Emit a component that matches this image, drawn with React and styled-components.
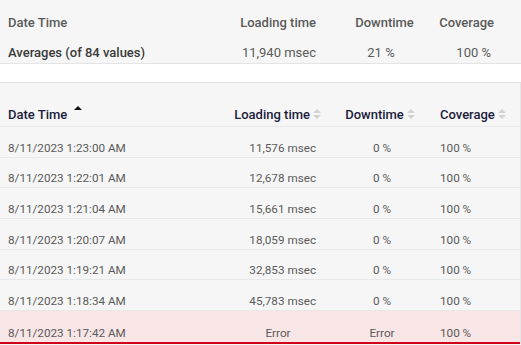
import React from "react";
import styled, { createGlobalStyle } from "styled-components";

const rows = [
  { date: "8/11/2023 1:23:00 AM", loading: "11,576 msec", down: "0 %", cov: "100 %" },
  { date: "8/11/2023 1:22:01 AM", loading: "12,678 msec", down: "0 %", cov: "100 %" },
  { date: "8/11/2023 1:21:04 AM", loading: "15,661 msec", down: "0 %", cov: "100 %" },
  { date: "8/11/2023 1:20:07 AM", loading: "18,059 msec", down: "0 %", cov: "100 %" },
  { date: "8/11/2023 1:19:21 AM", loading: "32,853 msec", down: "0 %", cov: "100 %" },
  { date: "8/11/2023 1:18:34 AM", loading: "45,783 msec", down: "0 %", cov: "100 %" },
  { date: "8/11/2023 1:17:42 AM", loading: "Error", down: "Error", cov: "100 %", error: true },
];

function SortIcon({ active }) {
  if (active) {
    return (
      <Icon width="8" height="12" viewBox="0 0 8 12" $active>
        <path d="M0 5 L4 1 L8 5 Z" fill="#111" />
      </Icon>
    );
  }
  return (
    <Icon width="8" height="12" viewBox="0 0 8 12">
      <path d="M0 5 L4 1 L8 5 Z" fill="#d2d2d2" />
      <path d="M0 7 L4 11 L8 7 Z" fill="#d2d2d2" />
    </Icon>
  );
}

function App() {
  return (
    <>
      <GlobalStyle />
      <Page>
        <Summary>
          <SumHead>Date Time</SumHead>
          <SumHead $align="right">Loading time</SumHead>
          <SumHead $align="center" $pad="0 0 0 9px">Downtime</SumHead>
          <SumHead $align="right" $pad="0 27px 0 0">Coverage</SumHead>
          <SumLabel>Averages (of 84 values)</SumLabel>
          <SumValue $align="right">11,940 msec</SumValue>
          <SumValue $align="center" $pad="0 0 0 2px">21 %</SumValue>
          <SumValue $align="right" $pad="0 30px 0 0">100 %</SumValue>
        </Summary>
        <Spacer />
        <Table>
          <HeadRow>
            <Th>
              Date Time <SortIcon active />
            </Th>
            <Th $align="flex-end" $pad="0 9px 4px 0">
              Loading time <SortIcon />
            </Th>
            <Th $align="center" $pad="0 0 4px 0">
              Downtime <SortIcon />
            </Th>
            <Th $pad="0 0 4px 10px">
              Coverage <SortIcon />
            </Th>
          </HeadRow>
          {rows.map((r) => (
            <Row key={r.date} $error={r.error}>
              <Td>{r.date}</Td>
              <Td $align={r.error ? "center" : "right"} $pad={r.error ? "0 0 0 6px" : "0 14px 0 0"}>
                {r.loading}
              </Td>
              <Td $align="center" $pad="0 0 0 4px">{r.down}</Td>
              <Td $pad="0 0 0 10px">{r.cov}</Td>
            </Row>
          ))}
        </Table>
      </Page>
    </>
  );
}

const GlobalStyle = createGlobalStyle`
  body {
    margin: 0;
    background: #f6f6f6;
    font-family: Roboto, "Liberation Sans", sans-serif;
  }
  * {
    box-sizing: border-box;
  }
`;

const Page = styled.div`
  width: 521px;
  height: 345px;
  overflow: hidden;
  background: #f6f6f6;
`;

const cols = "220px 110px 100px 91px";

const Summary = styled.div`
  display: grid;
  grid-template-columns: ${cols};
  grid-template-rows: 30px 30px;
  padding-top: 7px;
  height: 64px;
  border-bottom: 1px solid #e4e4e4;
`;

const SumCell = styled.div`
  display: flex;
  align-items: center;
  justify-content: ${(p) =>
    p.$align === "right" ? "flex-end" : p.$align === "center" ? "center" : "flex-start"};
  padding: ${(p) => p.$pad || (p.$align === "right" ? "0 14px 0 0" : "0")};
  font-size: 13px;
  white-space: nowrap;
`;

const SumHead = styled(SumCell)`
  color: #5a5a5a;
  font-weight: 500;
  &:first-child {
    padding-left: 8px;
  }
`;

const SumLabel = styled(SumCell)`
  color: #3a3a3a;
  font-weight: 500;
  padding-left: 8px;
`;

const SumValue = styled(SumCell)`
  color: #5a5a5a;
`;

const Spacer = styled.div`
  height: 19px;
  background: #fff;
  border-bottom: 1px solid #e4e4e4;
`;

const Table = styled.div`
  border-right: 1px solid #e6e6e6;
`;

const HeadRow = styled.div`
  display: grid;
  grid-template-columns: ${cols};
  height: 44px;
  border-bottom: 1px solid #e8e8e8;
`;

const Th = styled.div`
  display: flex;
  align-items: flex-end;
  justify-content: ${(p) => p.$align || "flex-start"};
  gap: 3px;
  padding: ${(p) => p.$pad || "0 0 4px 8px"};
  color: #1c1c3c;
  font-size: 13px;
  line-height: 15px;
  font-weight: 500;
  white-space: nowrap;
`;

const Icon = styled.svg`
  display: block;
  flex: none;
  margin-left: ${(p) => (p.$active ? "4px" : "0")};
  margin-bottom: ${(p) => (p.$active ? "5px" : "2px")};
`;

const Row = styled.div`
  display: grid;
  grid-template-columns: ${cols};
  height: ${(p) => (p.$error ? "33px" : "30.67px")};
  background: ${(p) => (p.$error ? "#f8e5e6" : "transparent")};
  border-bottom: ${(p) => (p.$error ? "2px solid #d0021b" : "1px solid #e8e8e8")};
`;

const Td = styled.div`
  display: flex;
  align-items: flex-end;
  justify-content: ${(p) =>
    p.$align === "right" ? "flex-end" : p.$align === "center" ? "center" : "flex-start"};
  padding: ${(p) => p.$pad || "0 0 0 8px"};
  padding-bottom: 2px;
  color: #5a5a5a;
  font-size: 11.7px;
  line-height: 14px;
  white-space: nowrap;
`;

export default App;
